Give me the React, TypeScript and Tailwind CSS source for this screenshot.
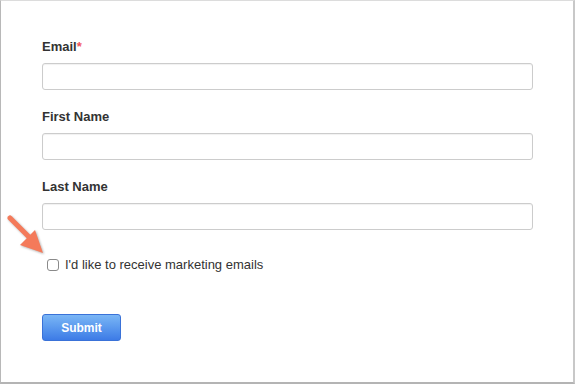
const fields = [
  { label: "Email", required: true },
  { label: "First Name", required: false },
  { label: "Last Name", required: false },
];

export default function App() {
  return (
    <div className="w-[576px] h-[386px] bg-white font-['Liberation_Sans',Arial,sans-serif]">
      <div className="relative w-[575px] h-[384px] border border-[#dcdcdc] border-l-[#b8b8b8] border-b-2 border-b-[#b4b4b4] border-r-2 border-r-[#c8c8c8] bg-white pl-[41px] pr-[40px] pt-[36px]">
        <form className="flex flex-col" onSubmit={(e) => e.preventDefault()}>
          {fields.map((f) => (
            <div key={f.label} className="mb-[17px] flex flex-col">
              <label className="h-[20px] text-[13px] font-bold leading-[20px] text-[#333333]">
                {f.label}
                {f.required && <span className="text-[#f2545b]">*</span>}
              </label>
              <input
                type="text"
                className="mt-[6px] h-[27px] w-[491px] rounded-[3px] border border-[#cccccc] bg-white px-2 text-[13px] shadow-[inset_0_1px_1px_rgba(0,0,0,0.06)] outline-none"
              />
            </div>
          ))}

          <label className="mt-[10px] ml-[5px] flex items-center gap-[6px] text-[13px] text-[#333333]">
            <input
              type="checkbox"
              className="h-[12px] w-[12px] appearance-none rounded-[3px] border border-[#8a8a8a] bg-white"
            />
            <span className="leading-[15px]">I'd like to receive marketing emails</span>
          </label>

          <div className="mt-[42px]">
            <button
              type="submit"
              className="h-[27px] w-[79px] rounded-[3px] border border-[#3a72d8] bg-gradient-to-b from-[#7ab6f5] to-[#3d7be6] text-[12px] font-bold text-white"
            >
              Submit
            </button>
          </div>
        </form>

        <svg
          className="absolute left-[-1px] top-[210px]"
          width="50"
          height="50"
          viewBox="0 0 50 50"
        >
          <g style={{ filter: "drop-shadow(1px 1px 1px rgba(0,0,0,0.3))" }}>
            <line x1="10" y1="7" x2="29" y2="26" stroke="#f47a5a" strokeWidth="5" strokeLinecap="round" />
            <polygon points="43,42 20,34 35,19" fill="#f47a5a" />
          </g>
        </svg>
      </div>
    </div>
  );
}
